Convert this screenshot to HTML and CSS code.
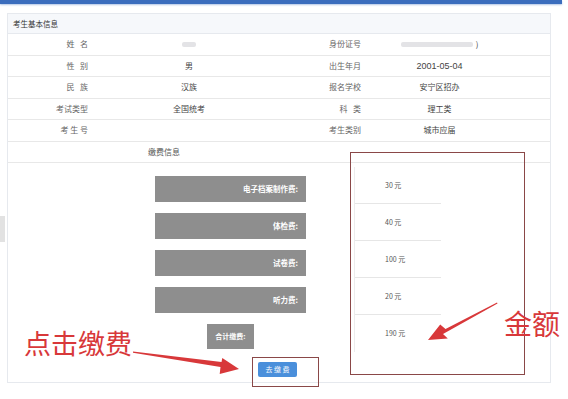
FILE: index.html
```html
<!DOCTYPE html>
<html lang="zh-CN">
<head>
    <meta charset="UTF-8">
    <title>考生基本信息</title>
    <link rel="stylesheet" href="styles.css">
</head>
<body>
    <div class="page">
        <div class="top-bar"></div>
        <div class="side-tab"></div>

        <div class="panel">
            <div class="panel-title">考生基本信息</div>

            <div class="info-row">
                <div class="lbl">姓&nbsp;&nbsp;&nbsp;名</div>
                <div class="val"><span class="blur short"></span></div>
                <div class="lbl">身份证号</div>
                <div class="val val-r"><span class="blur long"></span>)</div>
            </div>
            <div class="info-row">
                <div class="lbl">性&nbsp;&nbsp;&nbsp;别</div>
                <div class="val">男</div>
                <div class="lbl">出生年月</div>
                <div class="val val-r date">2001-05-04</div>
            </div>
            <div class="info-row">
                <div class="lbl">民&nbsp;&nbsp;&nbsp;族</div>
                <div class="val">汉族</div>
                <div class="lbl">报名学校</div>
                <div class="val val-r">安宁区招办</div>
            </div>
            <div class="info-row">
                <div class="lbl">考试类型</div>
                <div class="val">全国统考</div>
                <div class="lbl">科&nbsp;&nbsp;&nbsp;类</div>
                <div class="val val-r">理工类</div>
            </div>
            <div class="info-row">
                <div class="lbl">考 生 号</div>
                <div class="val"></div>
                <div class="lbl">考生类别</div>
                <div class="val val-r">城市应届</div>
            </div>
            <div class="info-row section-row">
                <div class="section-name">缴费信息</div>
            </div>

            <div class="fee-area">
                <div class="fee-labels">
                    <div class="fee-bar">电子档案制作费:</div>
                    <div class="fee-bar">体检费:</div>
                    <div class="fee-bar">试卷费:</div>
                    <div class="fee-bar">听力费:</div>
                    <div class="fee-total">合计缴费:</div>
                </div>
                <div class="fee-amounts">
                    <div class="amount">30 元</div>
                    <div class="amount">40 元</div>
                    <div class="amount">100 元</div>
                    <div class="amount">20 元</div>
                    <div class="amount last">190 元</div>
                </div>
            </div>
            <div class="pay-row">
                <button class="pay-btn">去 缴 费</button>
            </div>
        </div>

        <!-- annotations drawn over the screenshot -->
        <div class="mark mark-amounts"></div>
        <div class="mark mark-btn"></div>
        <div class="note note-pay">点击缴费</div>
        <div class="note note-sum">金额</div>
        <svg class="arrows" width="568" height="399" viewBox="0 0 568 399">
            <polygon points="133,351.5 221.5,362 222.3,358 239,369 219.7,374 220.5,367 133,352.8" fill="#d8383a"/>
            <polygon points="497,302.5 445.5,329 440.2,324.4 428,340 447.8,338.6 443,334 497.5,303.5" fill="#d8383a"/>
        </svg>
    </div>
</body>
</html>
```

FILE: styles.css
```css
* {
    box-sizing: border-box;
}

body {
    margin: 0;
    background-color: #fff;
    font-family: "Noto Sans CJK SC", "Noto Sans", sans-serif;
    color: #444;
}

.page {
    position: relative;
    width: 568px;
    height: 399px;
    overflow: hidden;
}

.top-bar {
    width: 562px;
    height: 4px;
    background-color: #3b6dbd;
    box-shadow: 0 1px 2px rgba(59, 109, 189, 0.4);
}

.side-tab {
    position: absolute;
    left: 0;
    top: 216px;
    width: 5px;
    height: 26px;
    background-color: #e2e2e2;
}

.panel {
    margin: 9px 0 0 7px;
    width: 544px;
    height: 370px;
    border: 1px solid #e6e9ee;
}

.panel-title {
    height: 20px;
    padding-left: 5px;
    font-size: 7.5px;
    line-height: 20px;
    color: #333;
    background-color: #f6f8fb;
    border-bottom: 1px solid #e6e9ee;
}

.info-row {
    display: grid;
    grid-template-columns: 88px 186px 87px 1fr;
    height: 21.5px;
    border-bottom: 1px solid #e8e8e8;
    font-size: 8px;
    line-height: 20.5px;
}

.lbl {
    text-align: right;
    padding-right: 8px;
    color: #666;
}

.val {
    text-align: center;
    color: #444;
}

.val-r {
    padding-right: 40px;
}

.date {
    font-family: "Liberation Sans", sans-serif;
    font-size: 9px;
}

.blur {
    display: inline-block;
    height: 5px;
    vertical-align: middle;
    background-color: #e3e3e6;
    border-radius: 2px;
}

.blur.short {
    width: 14px;
}

.blur.long {
    width: 72px;
    margin-right: 3px;
}

.section-row {
    display: block;
}

.section-name {
    padding-left: 140px;
    color: #555;
}

.fee-area {
    display: flex;
    padding-left: 147px;
    height: 190px;
}

.fee-labels {
    width: 151px;
    padding-top: 13px;
    display: flex;
    flex-direction: column;
    align-items: center;
}

.fee-bar {
    width: 151px;
    height: 26px;
    margin-bottom: 11px;
    padding-right: 8px;
    background-color: #8e8e8e;
    color: #fff;
    font-size: 7.5px;
    font-weight: bold;
    line-height: 26px;
    text-align: right;
}

.fee-total {
    width: 47px;
    height: 25px;
    background-color: #8e8e8e;
    color: #fff;
    font-size: 7px;
    font-weight: bold;
    line-height: 25px;
    text-align: center;
}

.fee-amounts {
    margin-left: 48px;
    margin-top: 4px;
    width: 87px;
    height: 185px;
    border-left: 1px solid #ececec;
}

.amount {
    height: 37px;
    padding-left: 30px;
    border-bottom: 1px solid #e6e6e6;
    font-size: 7px;
    line-height: 37px;
    color: #555;
}

.amount.last {
    border-bottom: none;
}

.pay-row {
    padding-left: 250px;
}

.pay-btn {
    width: 39px;
    height: 15px;
    padding: 0;
    border: none;
    border-radius: 2px;
    background-color: #4a8fdb;
    color: #fff;
    font-family: "Noto Sans CJK SC", sans-serif;
    font-size: 7px;
    line-height: 15px;
}

.mark {
    position: absolute;
    border: 1.5px solid #8a4848;
}

.mark-amounts {
    left: 350px;
    top: 152px;
    width: 175px;
    height: 223px;
}

.mark-btn {
    left: 252px;
    top: 357px;
    width: 67px;
    height: 30px;
}

.note {
    position: absolute;
    color: #d8383a;
    font-size: 27px;
    line-height: 1;
    white-space: nowrap;
}

.note-pay {
    left: 24px;
    top: 329px;
}

.note-sum {
    left: 504px;
    top: 309px;
    font-size: 28px;
}

.arrows {
    position: absolute;
    left: 0;
    top: 0;
    pointer-events: none;
}
```
